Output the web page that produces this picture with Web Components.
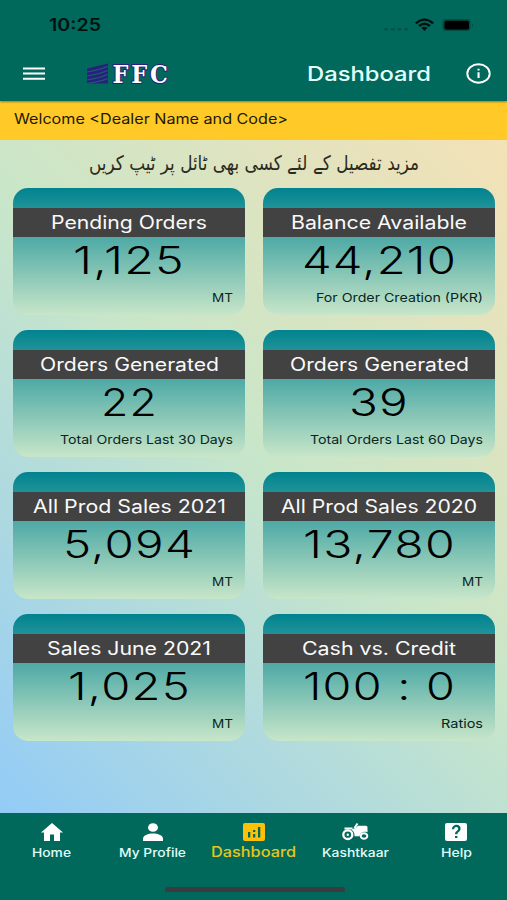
<!DOCTYPE html>
<html lang="en">
<head>
<meta charset="utf-8">
<title>Dashboard</title>
<style>
    body {
        margin: 0;
        font-family: Inter, Roboto, sans-serif;
    }
</style>
</head>
<body>
<dealer-app></dealer-app>

<script>
// One line of text set to an exact width (wide letterforms)
class WideText extends HTMLElement {
    connectedCallback() {
        const width = Number(this.getAttribute('width'));
        const size = Number(this.getAttribute('size'));
        const height = Math.round(size * 1.2);
        const rtl = this.getAttribute('dir') === 'rtl';
        this.attachShadow({ mode: 'open' });
        this.shadowRoot.innerHTML = `
            <style>
                :host { display: block; flex: none; width: ${width}px; height: ${height}px; }
                svg { display: block; overflow: visible; }
                text { fill: currentColor; white-space: pre; }
            </style>
            <svg width="${width}" height="${height}">
                <text x="${rtl ? width : 0}" y="${size * 0.96}" font-size="${size}"
                    textLength="${width}" lengthAdjust="spacingAndGlyphs"></text>
            </svg>
        `;
        this.shadowRoot.querySelector('text').textContent = this.getAttribute('text');
    }
}
customElements.define('wide-text', WideText);

class StatusBar extends HTMLElement {
    connectedCallback() {
        this.attachShadow({ mode: 'open' });
        this.shadowRoot.innerHTML = `
            <style>
                :host {
                    display: flex;
                    justify-content: space-between;
                    align-items: center;
                    height: 48px;
                    padding: 1px 32px 0 49px;
                    box-sizing: border-box;
                    color: #00120f;
                }
                wide-text { font-weight: 600; }
                svg { display: block; }
            </style>
            <wide-text text="10:25" width="52" size="17"></wide-text>
            <svg width="93" height="16" viewBox="0 0 93 16">
                <g fill="#00554a">
                    <rect x="2" y="11" width="4" height="2.4" rx="1"/>
                    <rect x="9" y="11" width="4" height="2.4" rx="1"/>
                    <rect x="15.500" y="11" width="4" height="2.4" rx="1"/>
                    <rect x="22" y="11" width="4" height="2.4" rx="1"/>
                </g>
                <g fill="none" stroke="#00120f" stroke-width="2.3">
                    <path d="M33.800 6.300Q42.500-1 51.200 6.300"/>
                    <path d="M37 9Q42.500 4.500 48 9"/>
                </g>
                <path d="M39.300 10.800Q42.500 8.500 45.700 10.800L42.500 14z" fill="#00120f"/>
                <rect x="60.500" y="2" width="28" height="12" rx="3.500" fill="#004c43"/>
                <rect x="62.500" y="3.700" width="24.500" height="8.800" rx="1.800" fill="#000"/>
                <path d="M90 6q2 2 0 4z" fill="#004c43"/>
            </svg>
        `;
    }
}
customElements.define('status-bar', StatusBar);

class BrandLogo extends HTMLElement {
    connectedCallback() {
        this.attachShadow({ mode: 'open' });
        this.shadowRoot.innerHTML = `
            <style>
                :host { display: block; }
                svg { display: block; overflow: visible; }
                text {
                    font: bold 24px "DejaVu Serif", serif;
                    letter-spacing: 3px;
                    fill: #fff;
                    stroke: #27217c;
                    stroke-width: 2px;
                    paint-order: stroke;
                }
            </style>
            <svg width="82" height="24" viewBox="0 0 82 24">
                <path d="M0 7.500L21 2.500v20H0z" fill="#27217c"/>
                <g fill="none" stroke="#1c5a76" stroke-width="1.100">
                    <path d="M0 11Q12 9 21 5.500"/>
                    <path d="M0 15Q12 13 21 9.500"/>
                    <path d="M0 19Q12 17 21 13.500"/>
                    <path d="M0 22.500Q12 21 21 17.500"/>
                </g>
                <text x="25.500" y="21.500" textLength="58" lengthAdjust="spacingAndGlyphs">FFC</text>
            </svg>
        `;
    }
}
customElements.define('brand-logo', BrandLogo);

class AppHeader extends HTMLElement {
    connectedCallback() {
        this.attachShadow({ mode: 'open' });
        this.shadowRoot.innerHTML = `
            <style>
                :host {
                    display: block;
                    height: 101px;
                    background: #00695c;
                    box-shadow: 0 1px 2px rgba(0, 0, 0, 0.4);
                    position: relative;
                }
                .toolbar {
                    display: flex;
                    align-items: center;
                    height: 52px;
                    padding: 0 16px 0 23px;
                    color: #e4fffb;
                }
                .menu { display: block; margin-right: 42px; }
                brand-logo { margin-bottom: 2px; }
                .title { margin-left: auto; font-weight: 500; }
                .info { display: block; margin-left: 35px; margin-bottom: 1px; }
            </style>
            <status-bar></status-bar>
            <div class="toolbar">
                <svg class="menu" width="22" height="14" viewBox="0 0 22 14">
                    <path d="M0 1.500h22M0 6.500h22M0 11.700h22" stroke="#fff" stroke-width="2"/>
                </svg>
                <brand-logo></brand-logo>
                <wide-text class="title" text="Dashboard" width="124" size="20"></wide-text>
                <svg class="info" width="25" height="21" viewBox="0 0 25 21">
                    <ellipse cx="12.500" cy="10.500" rx="11.200" ry="9.200" fill="none" stroke="#fff" stroke-width="1.900"/>
                    <path d="M11.500 5.700h2.100v1.900h-2.100zM11.500 9.300h2.100v5.700h-2.100z" fill="#fff"/>
                </svg>
            </div>
        `;
    }
}
customElements.define('app-header', AppHeader);

class StatTile extends HTMLElement {
    connectedCallback() {
        const get = (name) => this.getAttribute(name);
        this.attachShadow({ mode: 'open' });
        this.shadowRoot.innerHTML = `
            <style>
                :host {
                    display: flex;
                    flex-direction: column;
                    align-items: center;
                    height: 127px;
                    padding-top: 20px;
                    box-sizing: border-box;
                    border-radius: 15px;
                    background: linear-gradient(#00838f, #c8e6c9);
                    overflow: hidden;
                }
                .name {
                    display: flex;
                    justify-content: center;
                    align-items: center;
                    align-self: stretch;
                    height: 29px;
                    padding-top: 1px;
                    box-sizing: border-box;
                    background: #424242;
                    color: #fafafa;
                }
                .value {
                    margin-top: 1px;
                    color: #000;
                    font-weight: 350;
                    letter-spacing: 1px;
                }
                .note {
                    align-self: flex-end;
                    margin: 6px 12px 0 0;
                    color: #08251f;
                }
            </style>
            <div class="name"><wide-text text="${get('name')}" width="${get('name-width')}" size="18"></wide-text></div>
            <wide-text class="value" text="${get('value')}" width="${get('value-width')}" size="38"></wide-text>
            <wide-text class="note" text="${get('note')}" width="${get('note-width')}" size="12"></wide-text>
        `;
    }
}
customElements.define('stat-tile', StatTile);

const ICONS = {
    home: '<path d="M12 2L1 11.500h3V20h6v-6.500h4V20h6v-8.500h3z"/>',
    profile: '<ellipse cx="12" cy="6.500" rx="5" ry="4.300"/><path d="M2 20v-2.500c0-3 5-5 10-5s10 2 10 5V20z"/>',
    chart: '<path fill-rule="evenodd" d="M3 2h18a2 2 0 0 1 2 2v14a2 2 0 0 1-2 2H3a2 2 0 0 1-2-2V4a2 2 0 0 1 2-2zM6 11v5.500h2.300V11zM11 13v3.500h2.300V13zM11 9v2h2.300V9zM16 6v10.500h2.300V6z"/>',
    tractor: `<g fill="none" stroke="currentColor">
            <ellipse cx="4.800" cy="13.700" rx="4.500" ry="4.300" stroke-width="2.300"/>
            <ellipse cx="21" cy="15" rx="3.300" ry="2.800" stroke-width="2"/>
            <path d="M1.500 7.500h8M14.500 2.500l-3 4.500" stroke-width="2"/>
        </g>
        <circle cx="4.800" cy="13.700" r="1.200"/>
        <path d="M9.500 8l3-1 2.500-2.300H23q1.500 0 1.500 1.500v5c-4-1.500-7.500.5-8 4h-5c.3-3-.7-5-3-6.200z"/>`,
    help: '<path fill-rule="evenodd" d="M3 2h18a2 2 0 0 1 2 2v14a2 2 0 0 1-2 2H3a2 2 0 0 1-2-2V4a2 2 0 0 1 2-2zM11 15v2h2.400v-2zM8 8.300h2.200c0-3.200 4-2.800 4-.6 0 2-3.200 2.300-3.200 5.600h2.300c0-2.400 3.300-2.700 3.300-5.900 0-5.200-8.600-4.800-8.600.9z"/>'
};

class NavItem extends HTMLElement {
    connectedCallback() {
        const active = this.hasAttribute('active');
        this.attachShadow({ mode: 'open' });
        this.shadowRoot.innerHTML = `
            <style>
                :host {
                    display: flex;
                    flex-direction: column;
                    align-items: center;
                    padding-top: 8px;
                    color: ${active ? '#ffc107' : '#fff'};
                }
                svg { display: block; fill: currentColor; overflow: visible; }
                wide-text { margin-top: ${active ? 1 : 2}px; color: ${active ? '#e6c51c' : '#e0fcf7'}; font-weight: 500; }
            </style>
            <svg width="24" height="22" viewBox="0 0 24 22">${ICONS[this.getAttribute('icon')]}</svg>
            <wide-text text="${this.getAttribute('label')}" width="${this.getAttribute('width')}" size="${active ? 14 : 12}"></wide-text>
        `;
    }
}
customElements.define('nav-item', NavItem);

class BottomNav extends HTMLElement {
    connectedCallback() {
        this.attachShadow({ mode: 'open' });
        this.shadowRoot.innerHTML = `
            <style>
                :host {
                    display: flex;
                    flex-direction: column;
                    justify-content: space-between;
                    height: 87px;
                    padding-left: 1px;
                    background: #00695c;
                }
                nav { display: grid; grid-template-columns: repeat(5, 101.2px); }
                .handle {
                    align-self: center;
                    width: 180px;
                    height: 5px;
                    margin: 0 0 8px 1px;
                    border-radius: 3px;
                    background: #3b3a40;
                }
            </style>
            <nav><slot></slot></nav>
            <div class="handle"></div>
        `;
    }
}
customElements.define('bottom-nav', BottomNav);

class DealerApp extends HTMLElement {
    connectedCallback() {
        this.attachShadow({ mode: 'open' });
        this.shadowRoot.innerHTML = `
            <style>
                :host {
                    display: flex;
                    flex-direction: column;
                    width: 507px;
                    height: 900px;
                    background: linear-gradient(225deg, #ffe0b2, #c8e6c9 50%, #90caf9 96%);
                    overflow: hidden;
                }
                .welcome {
                    height: 39px;
                    padding: 10px 0 0 14px;
                    box-sizing: border-box;
                    background: #ffca28;
                    color: #1d1803;
                }
                .hint {
                    display: flex;
                    justify-content: center;
                    height: 48.400px;
                    padding-top: 11px;
                    box-sizing: border-box;
                    color: #2b2a22;
                    font-family: "DejaVu Sans", sans-serif;
                }
                main {
                    flex: 1;
                    display: grid;
                    grid-template-columns: 232px 232px;
                    grid-auto-rows: 127px;
                    gap: 14.8px 18px;
                    padding: 0 13px;
                }
            </style>
            <app-header></app-header>
            <div class="welcome">
                <wide-text text="Welcome &lt;Dealer Name and Code&gt;" width="274" size="14"></wide-text>
            </div>
            <div class="hint">
                <wide-text dir="rtl" text="مزید تفصیل کے لئے کسی بھی ٹائل پر ٹیپ کریں" width="330" size="20"></wide-text>
            </div>
            <main>
                <stat-tile name="Pending Orders" name-width="156" value="1,125" value-width="112" note="MT" note-width="21"></stat-tile>
                <stat-tile name="Balance Available" name-width="176" value="44,210" value-width="155" note="For Order Creation (PKR)" note-width="167"></stat-tile>
                <stat-tile name="Orders Generated" name-width="179" value="22" value-width="57" note="Total Orders Last 30 Days" note-width="173"></stat-tile>
                <stat-tile name="Orders Generated" name-width="179" value="39" value-width="60" note="Total Orders Last 60 Days" note-width="173"></stat-tile>
                <stat-tile name="All Prod Sales 2021" name-width="193" value="5,094" value-width="133" note="MT" note-width="21"></stat-tile>
                <stat-tile name="All Prod Sales 2020" name-width="196" value="13,780" value-width="153" note="MT" note-width="21"></stat-tile>
                <stat-tile name="Sales June 2021" name-width="164" value="1,025" value-width="123" note="MT" note-width="21"></stat-tile>
                <stat-tile name="Cash vs. Credit" name-width="154" value="100 : 0" value-width="153" note="Ratios" note-width="42"></stat-tile>
            </main>
            <bottom-nav>
                <nav-item icon="home" label="Home" width="39"></nav-item>
                <nav-item icon="profile" label="My Profile" width="67"></nav-item>
                <nav-item icon="chart" label="Dashboard" width="85" active></nav-item>
                <nav-item icon="tractor" label="Kashtkaar" width="67"></nav-item>
                <nav-item icon="help" label="Help" width="31"></nav-item>
            </bottom-nav>
        `;
    }
}
customElements.define('dealer-app', DealerApp);
</script>
</body>
</html>
